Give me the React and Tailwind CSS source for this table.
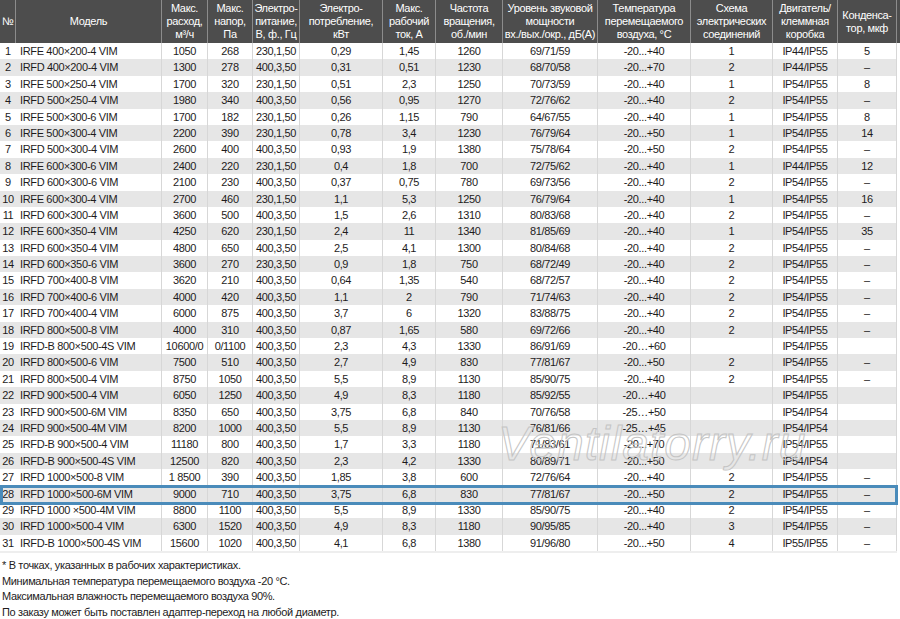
import React from 'react'

const cols = "grid grid-cols-[16px_146px_46px_45px_47px_83px_53px_67px_95px_93px_82px_65px_59px_3px]"

const headers = [
  "№",
  "Модель",
  ["Макс.", "расход,", "м³/ч"],
  ["Макс.", "напор,", "Па"],
  ["Электро-", "питание,", "В, ф., Гц"],
  ["Электро-", "потребление,", "кВт"],
  ["Макс.", "рабочий", "ток, А"],
  ["Частота", "вращения,", "об./мин"],
  ["Уровень звуковой", "мощности", "вх./вых./окр., дБ(А)"],
  ["Температура", "перемещаемого", "воздуха, °С"],
  ["Схема", "электрических", "соединений"],
  ["Двигатель/", "клеммная", "коробка"],
  ["Конденса-", "тор, мкф"],
]

const rows = [
  ["IRFE 400×200-4 VIM", "1050", "268", "230,1,50", "0,29", "1,45", "1260", "69/71/59", "-20...+40", "1", "IP44/IP55", "5"],
  ["IRFD 400×200-4 VIM", "1300", "278", "400,3,50", "0,31", "0,51", "1230", "68/70/58", "-20...+70", "2", "IP44/IP55", "–"],
  ["IRFE 500×250-4 VIM", "1700", "320", "230,1,50", "0,51", "2,3", "1250", "70/73/59", "-20...+40", "1", "IP54/IP55", "8"],
  ["IRFD 500×250-4 VIM", "1980", "340", "400,3,50", "0,56", "0,95", "1270", "72/76/62", "-20...+40", "2", "IP54/IP55", "–"],
  ["IRFE 500×300-6 VIM", "1700", "182", "230,1,50", "0,26", "1,15", "790", "64/67/55", "-20...+40", "1", "IP54/IP55", "8"],
  ["IRFE 500×300-4 VIM", "2200", "390", "230,1,50", "0,78", "3,4", "1230", "76/79/64", "-20...+50", "1", "IP54/IP55", "14"],
  ["IRFD 500×300-4 VIM", "2600", "400", "400,3,50", "0,93", "1,9", "1380", "75/78/64", "-20...+50", "2", "IP54/IP55", "–"],
  ["IRFE 600×300-6 VIM", "2400", "220", "230,1,50", "0,4", "1,8", "700", "72/75/62", "-20...+40", "1", "IP44/IP55", "12"],
  ["IRFD 600×300-6 VIM", "2100", "230", "400,3,50", "0,37", "0,75", "780", "69/73/56", "-20...+40", "2", "IP54/IP55", "–"],
  ["IRFE 600×300-4 VIM", "2700", "460", "230,1,50", "1,1", "5,3", "1250", "76/79/64", "-20...+40", "1", "IP54/IP55", "16"],
  ["IRFD 600×300-4 VIM", "3600", "500", "400,3,50", "1,5", "2,6", "1310", "80/83/68", "-20...+40", "2", "IP54/IP55", "–"],
  ["IRFE 600×350-4 VIM", "4250", "620", "230,1,50", "2,4", "11", "1340", "81/85/69", "-20...+40", "1", "IP54/IP55", "35"],
  ["IRFD 600×350-4 VIM", "4800", "650", "400,3,50", "2,5", "4,1", "1300", "80/84/68", "-20...+40", "2", "IP54/IP55", "–"],
  ["IRFD 600×350-6 VIM", "3600", "270", "230,3,50", "0,9", "1,8", "750", "68/72/49", "-20...+40", "2", "IP54/IP55", "–"],
  ["IRFD 700×400-8 VIM", "3620", "210", "400,3,50", "0,64", "1,35", "540", "68/72/57", "-20...+40", "2", "IP54/IP55", "–"],
  ["IRFD 700×400-6 VIM", "4000", "420", "400,3,50", "1,1", "2", "790", "71/74/63", "-20...+40", "2", "IP54/IP55", "–"],
  ["IRFD 700×400-4 VIM", "6000", "875", "400,3,50", "3,7", "6", "1320", "83/88/75", "-20...+40", "2", "IP54/IP55", "–"],
  ["IRFD 800×500-8 VIM", "4000", "310", "400,3,50", "0,87", "1,65", "580", "69/72/66", "-20...+40", "2", "IP54/IP55", "–"],
  ["IRFD-B 800×500-4S VIM", "10600/0", "0/1100", "400,3,50", "2,3", "4,3", "1330", "86/91/69", "-20…+60", "", "IP54/IP55", ""],
  ["IRFD 800×500-6 VIM", "7500", "510", "400,3,50", "2,7", "4,9", "830", "77/81/67", "-20...+50", "2", "IP54/IP55", "–"],
  ["IRFD 800×500-4 VIM", "8750", "1050", "400,3,50", "5,5", "8,9", "1130", "85/90/75", "-20...+40", "2", "IP54/IP55", "–"],
  ["IRFD 900×500-4 VIM", "6050", "1250", "400,3,50", "4,9", "8,3", "1180", "85/92/55", "-20…+40", "", "IP54/IP55", ""],
  ["IRFD 900×500-6M VIM", "8350", "650", "400,3,50", "3,75", "6,8", "840", "70/76/58", "-25…+50", "", "IP54/IP54", ""],
  ["IRFD 900×500-4M VIM", "8200", "1000", "400,3,50", "5,5", "8,9", "1130", "76/81/66", "-25…+45", "", "IP54/IP54", ""],
  ["IRFD-B 900×500-4 VIM", "11180", "800", "400,3,50", "1,7", "3,3", "1180", "71/83/61", "-20...+70", "", "IP54/IP55", ""],
  ["IRFD-B 900×500-4S VIM", "12500", "820", "400,3,50", "2,3", "4,2", "1330", "80/89/71", "-20...+50", "", "IP54/IP54", ""],
  ["IRFD 1000×500-8 VIM", "1 8500", "390", "400,3,50", "1,85", "3,8", "600", "72/76/64", "-20...+40", "2", "IP54/IP55", "–"],
  ["IRFD 1000×500-6M VIM", "9000", "710", "400,3,50", "3,75", "6,8", "830", "77/81/67", "-20...+50", "2", "IP54/IP55", "–"],
  ["IRFD 1000 ×500-4M VIM", "8800", "1100", "400,3,50", "5,5", "8,9", "1330", "85/90/75", "-20...+40", "2", "IP54/IP55", "–"],
  ["IRFD 1000×500-4 VIM", "6300", "1520", "400,3,50", "4,9", "8,3", "1180", "90/95/85", "-20...+40", "3", "IP54/IP55", "–"],
  ["IRFD-B 1000×500-4S VIM", "15600", "1020", "400,3,50", "4,1", "6,8", "1380", "91/96/80", "-20...+50", "4", "IP55/IP55", "–"],
]

const notes = [
  "* В точках, указанных в рабочих характеристиках.",
  "Минимальная температура перемещаемого воздуха -20 °С.",
  "Максимальная влажность перемещаемого воздуха 90%.",
  "По заказу может быть поставлен адаптер-переход на любой диаметр.",
]

function HeaderRow() {
  return (
    <div className={`${cols} h-[43px] bg-[#4d4d4d] text-white leading-[13px]`}>
      {headers.map((h, i) => (
        <div
          key={i}
          className={`flex flex-col justify-center border-r border-[#8c8c8c] ${i === 0 ? "items-start pl-[2px]" : "items-center text-center"}`}
        >
          {Array.isArray(h) ? h.map((line, j) => <span key={j} className="whitespace-nowrap">{line}</span>) : <span>{h}</span>}
        </div>
      ))}
      <div />
    </div>
  )
}

function DataRow({ n, cells }) {
  const even = n % 2 === 0
  const selected = n === 28
  return (
    <div className={`${cols} h-[16.4px] items-center ${even ? "bg-[#e6e6e6]" : "bg-white"} ${selected ? "relative" : ""}`}>
      <div className="h-full flex items-center justify-center">{n}</div>
      {cells.map((c, i) => (
        <div
          key={i}
          className={`h-full flex items-center whitespace-nowrap border-r border-[#d7d7d7] ${i === 0 ? "pl-[4px]" : "justify-center"}`}
        >
          {c}
        </div>
      ))}
      <div className="h-full bg-white" />
      {selected && (
        <div className="absolute z-10 left-0 w-[898px] top-[-1px] h-[20px] border-[3px] border-solid border-[#4a8bba] pointer-events-none" />
      )}
    </div>
  )
}

export default function App() {
  return (
    <div className="relative w-[900px] h-[619px] bg-white text-[#1e1b1c] text-[11px] tracking-[-0.35px] font-['Liberation_Sans',Arial,sans-serif] overflow-hidden">
      <HeaderRow />
      <div className="border-b-[2px] border-[#eeeeee] w-[897px]">
        {rows.map((r, i) => (
          <DataRow key={i} n={i + 1} cells={r} />
        ))}
      </div>
      <div className="pt-[5px] pl-[2px] leading-[15.6px]">
        {notes.map((t, i) => (
          <p key={i}>{t}</p>
        ))}
      </div>

      {/* watermark */}
      <div className="absolute left-[498px] top-[420px] text-[48px] leading-none italic tracking-[1px] text-transparent [-webkit-text-stroke:1px_#c4c4c4] pointer-events-none select-none">
        Ventilatorry.ru
      </div>
    </div>
  )
}
